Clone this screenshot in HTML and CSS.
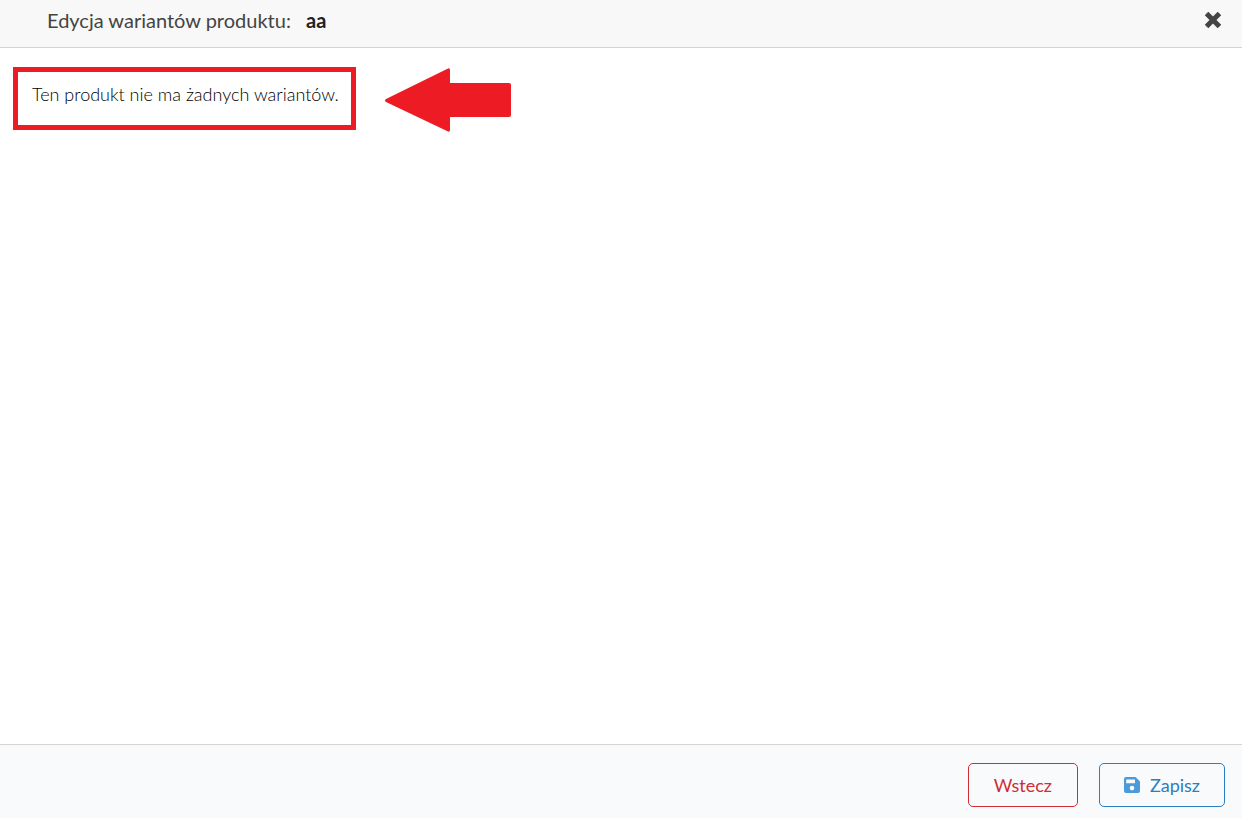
FILE: index.html
```html
<!DOCTYPE html>
<html lang="pl">
<head>
    <meta charset="UTF-8">
    <meta name="viewport" content="width=device-width, initial-scale=1.0">
    <title>Edycja wariantów produktu</title>
    <link rel="stylesheet" href="styles.css">
</head>
<body>
    <header class="modal-header">
        <h1 class="modal-title">Edycja wariantów produktu: <strong>aa</strong></h1>
        <button type="button" class="close-btn" aria-label="Zamknij">
            <svg width="18" height="18" viewBox="0 0 18 18" aria-hidden="true">
                <path d="M4.300 4.300L13.700 13.700M13.700 4.300L4.300 13.700" stroke="currentColor" stroke-width="5" stroke-linecap="square"/>
            </svg>
        </button>
    </header>

    <main class="modal-body">
        <p class="empty-info">Ten produkt nie ma żadnych wariantów.</p>
        <svg class="arrow" width="126" height="64" viewBox="0 0 126 64" aria-hidden="true">
            <path d="M1 31L62 1Q65 -1 65 2V15H124Q126 15 126 17V47Q126 49 124 49H65V62Q65 65 62 63L1 34Q-1 32.500 1 31Z" fill="#ed1c24"/>
        </svg>
    </main>

    <footer class="modal-footer">
        <button type="button" class="btn btn-back">Wstecz</button>
        <button type="submit" class="btn btn-save">
            <svg width="16" height="16" viewBox="0 0 16 16" aria-hidden="true">
                <path fill="#4a9bdc" fill-rule="evenodd" d="M2 0H11.500L16 4.500V14Q16 16 14 16H2Q0 16 0 14V2Q0 0 2 0ZM2.200 2.500V6.200H11V2.500ZM8 8.800A2.300 2.300 0 1 0 8 13.400A2.300 2.300 0 1 0 8 8.800Z"/>
            </svg>
            Zapisz
        </button>
    </footer>
</body>
</html>
```

FILE: styles.css
```css
* {
    margin: 0;
    padding: 0;
    box-sizing: border-box;
}

body {
    font-family: Lato, 'Open Sans', sans-serif;
    font-size: 18px;
    color: #222;
    background: white;
    min-height: 100vh;
    display: flex;
    flex-direction: column;
}

.modal-header {
    display: flex;
    align-items: center;
    justify-content: space-between;
    padding: 8px 20px 15px 47px;
    background: #f8f8f8;
    border-bottom: 1px solid #d4d4d5;
}

.modal-title {
    color: #444;
    font-size: 20px;
    font-weight: 400;
    line-height: 24px;
}

.modal-title strong {
    margin-left: 10px;
    color: #222;
    font-weight: 700;
}

.close-btn {
    display: flex;
    border: none;
    background: none;
    color: #444;
    cursor: pointer;
}

.modal-body {
    flex: 1;
    display: flex;
    align-items: flex-start;
    gap: 29px;
    padding: 19px 13px;
}

.empty-info {
    padding: 10px 12px 19px 14px;
    border: 5px solid #ed1c24;
    color: #000;
    font-weight: 300;
    line-height: 24px;
}

.arrow {
    margin-top: 1px;
}

.modal-footer {
    display: flex;
    justify-content: flex-end;
    gap: 21px;
    padding: 18px 17px 11px;
    background: #f9fafc;
    border-top: 1px solid #d4d4d5;
}

.btn {
    display: flex;
    align-items: center;
    gap: 10px;
    padding: 9px 25px;
    border: 1px solid;
    border-radius: 5px;
    background: none;
    font-family: inherit;
    font-size: 18px;
    line-height: 24px;
    cursor: pointer;
}

.btn-back {
    color: #cf2e33;
}

.btn-save {
    padding: 9px 24px;
    color: #2a7fc0;
}
```
